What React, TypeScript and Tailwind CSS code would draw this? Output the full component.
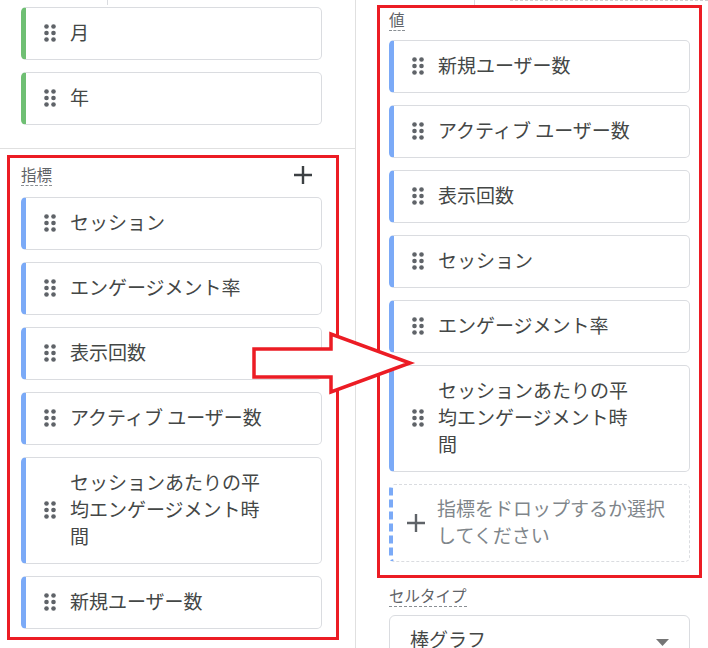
const leftTop = ["月", "年"];
const leftMetrics = [
  "セッション",
  "エンゲージメント率",
  "表示回数",
  "アクティブ ユーザー数",
  "セッションあたりの平均エンゲージメント時間",
  "新規ユーザー数",
];
const rightValues = [
  "新規ユーザー数",
  "アクティブ ユーザー数",
  "表示回数",
  "セッション",
  "エンゲージメント率",
  "セッションあたりの平均エンゲージメント時間",
];

function Grip() {
  return (
    <svg width="12" height="18" viewBox="0 0 12 18" className="shrink-0 fill-[#5f6368]">
      <circle cx="2.5" cy="2.5" r="2.3" />
      <circle cx="9.5" cy="2.5" r="2.3" />
      <circle cx="2.5" cy="9" r="2.3" />
      <circle cx="9.5" cy="9" r="2.3" />
      <circle cx="2.5" cy="15.5" r="2.3" />
      <circle cx="9.5" cy="15.5" r="2.3" />
    </svg>
  );
}

function Card({ label, green }: { label: string; green?: boolean }) {
  return (
    <div
      className={`flex w-[301px] items-center rounded-[5px] border border-l-[5px] border-[#dadce0] bg-white pt-[10px] pb-[14px] pl-[18px] ${
        green ? "border-l-[#6fbf73]" : "border-l-[#7baaf7]"
      }`}
    >
      <div className="mt-[3px]">
        <Grip />
      </div>
      <span className="ml-[14px] max-w-[200px] text-[19px] leading-[27px] text-[#444746]">{label}</span>
    </div>
  );
}

function Label({ text }: { text: string }) {
  return (
    <span className="inline-block self-start border-b border-dashed border-[#8a8f94] text-[15.5px] leading-[22px] text-[#5f6368]">
      {text}
    </span>
  );
}

function Plus({ size, stroke, color }: { size: number; stroke: number; color: string }) {
  return (
    <svg width={size} height={size} viewBox="0 0 18 18" className="shrink-0">
      <path d="M9 0v18M0 9h18" stroke={color} strokeWidth={stroke} fill="none" />
    </svg>
  );
}

export default function App() {
  return (
    <div className="relative flex h-[648px] w-[708px] overflow-hidden bg-white font-['Noto_Sans_CJK_JP',sans-serif]">
      {/* left column */}
      <div className="flex w-[356px] shrink-0 flex-col border-r border-[#e0e0e0]">
        <div className="h-[149px] shrink-0 border-b border-[#e0e0e0]">
          <div className="ml-[107px] h-[5px] w-px bg-[#dadce0]" />
          <div className="ml-[21px] mt-[2px] flex flex-col gap-[12px]">
            {leftTop.map((l) => (
              <Card key={l} label={l} green />
            ))}
          </div>
        </div>
        <div className="ml-[7px] mt-[6px] h-[485px] w-[332px] shrink-0 border-[3px] border-[#ec1c24] pl-[11px] pt-[5px]">
          <div className="flex w-[301px] items-center justify-between">
            <Label text="指標" />
            <div className="mr-[10px]">
              <Plus size={18} stroke={2.4} color="#3c4043" />
            </div>
          </div>
          <div className="mt-[11px] flex flex-col gap-[12px]">
            {leftMetrics.map((l) => (
              <Card key={l} label={l} />
            ))}
          </div>
        </div>
      </div>

      {/* right column */}
      <div className="flex flex-1 flex-col">
        <div className="flex h-[5px] shrink-0">
          <div className="ml-[118px] h-full w-px bg-[#dadce0]" />
          <div className="ml-[35px] flex-1 border-t border-dashed border-[#d0d0d0]" />
        </div>
        <div className="ml-[21px] flex h-[573px] w-[325px] shrink-0 flex-col border-[3px] border-[#ec1c24] pl-[9px]">
          <Label text="値" />
          <div className="mt-[9px] flex flex-col gap-[12px]">
            {rightValues.map((l) => (
              <Card key={l} label={l} />
            ))}
            <div className="flex w-[301px] items-center rounded-[5px] border border-l-[4px] border-dashed border-[#dadce0] border-l-[#7baaf7] pt-[9px] pb-[13px] pl-[14px]">
              <div className="mt-[3px]">
                <Plus size={18} stroke={2.4} color="#5f6368" />
              </div>
              <span className="ml-[12px] max-w-[236px] text-[19px] leading-[27px] text-[#80868b]">
                指標をドロップするか選択してください
              </span>
            </div>
          </div>
        </div>
        <div className="ml-[33px] mt-[6px] flex flex-col">
          <Label text="セルタイプ" />
          <div className="mt-[8px] flex h-[56px] w-[301px] items-start justify-between rounded-[6px] border border-[#dadce0] pl-[20px] pr-[20px] pt-[9px]">
            <span className="text-[19px] leading-[27px] text-[#444746]">棒グラフ</span>
            <svg width="13" height="7" viewBox="0 0 13 7" className="mt-[14px] fill-[#757575]">
              <path d="M0 0h13L6.5 7z" />
            </svg>
          </div>
        </div>
      </div>

      {/* annotation arrow */}
      <svg width="708" height="648" className="pointer-events-none absolute left-0 top-0">
        <polygon
          points="254,349 331,349 331,334 410,363 331,392 331,377 254,377"
          fill="#fff"
          stroke="#ec1c24"
          strokeWidth="3.5"
          strokeLinejoin="miter"
        />
      </svg>
    </div>
  );
}
